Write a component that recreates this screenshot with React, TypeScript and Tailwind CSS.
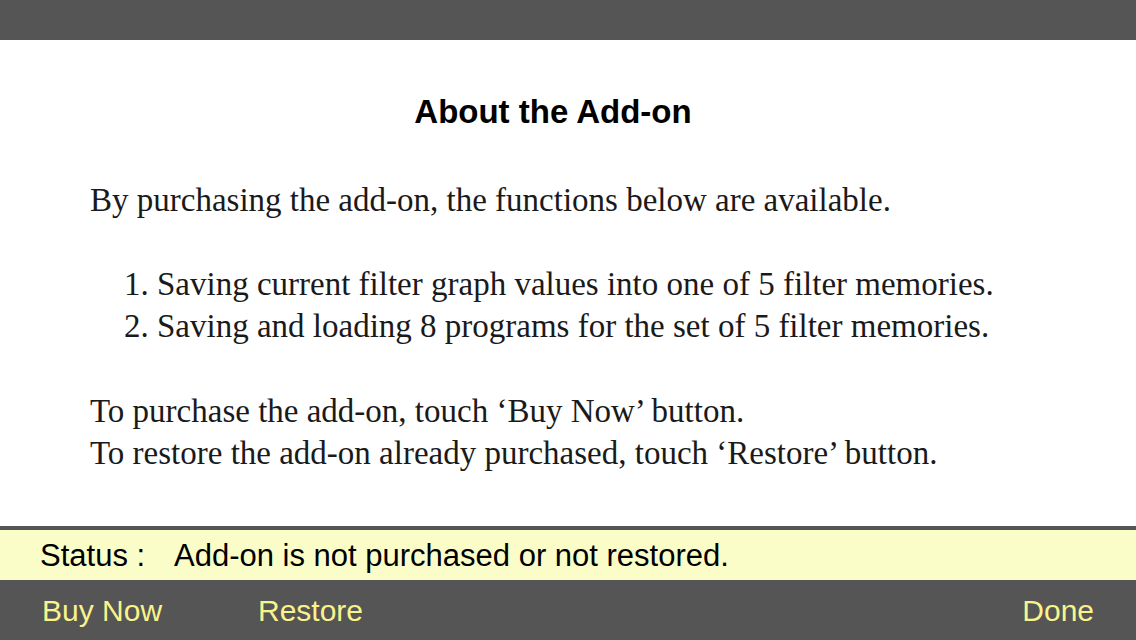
export default function App() {
  return (
    <div className="flex h-[640px] w-[1136px] flex-col overflow-hidden bg-white">
      <div className="h-10 shrink-0 bg-[#555555]" />

      <div className="flex-1 font-['Liberation_Serif',serif] text-[33px] text-[#1a1a1a]">
        <h1 className="mt-[52px] pr-[30px] text-center font-['Liberation_Sans',Arial,sans-serif] text-[33px] font-bold leading-[40px] text-black">
          About the Add-on
        </h1>
        <p className="mt-[47px] pl-[90px] leading-[42px]">
          By purchasing the add-on, the functions below are available.
        </p>
        <ol className="mt-[42px] pl-[124px] leading-[42px]">
          <li>1. Saving current filter graph values into one of 5 filter memories.</li>
          <li>2. Saving and loading 8 programs for the set of 5 filter memories.</li>
        </ol>
        <div className="mt-[43px] pl-[90px] leading-[42px]">
          <p>To purchase the add-on, touch ‘Buy Now’ button.</p>
          <p>To restore the add-on already purchased, touch ‘Restore’ button.</p>
        </div>
      </div>

      <div className="h-1 shrink-0 bg-[#555555]" />
      <div className="flex h-[50px] shrink-0 items-center bg-[#fbfdc8] pl-10 pt-[3px] font-['Liberation_Sans',Arial,sans-serif] text-[31px] text-black">
        <span className="w-[134px]">Status :</span>
        <span>Add-on is not purchased or not restored.</span>
      </div>
      <div className="flex h-[60px] shrink-0 items-center bg-[#555555] pl-[42px] pr-[42px] font-['Liberation_Sans',Arial,sans-serif] text-[30px] text-[#f9f38b]">
        <button className="w-[216px] text-left">Buy Now</button>
        <button>Restore</button>
        <button className="ml-auto">Done</button>
      </div>
    </div>
  );
}
